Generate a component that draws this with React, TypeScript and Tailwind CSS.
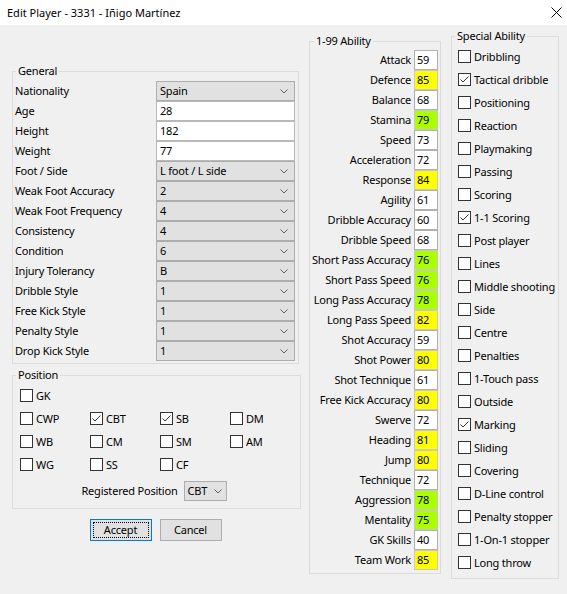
import React from "react";

const FONT = { fontFamily: '"Noto Sans", "Open Sans", sans-serif' };

function Chevron() {
  return (
    <svg width="8" height="5" viewBox="0 0 8 5" className="shrink-0">
      <polyline points="0.5,0.5 4,4 7.5,0.5" fill="none" stroke="#606060" strokeWidth="1" />
    </svg>
  );
}

function Combo({ value, className = "" }: { value: string; className?: string }) {
  return (
    <div className={`flex h-5 items-center justify-between border border-[#adadad] bg-[#e1e1e1] pl-[3px] pr-[6px] ${className}`}>
      <span>{value}</span>
      <Chevron />
    </div>
  );
}

function TextBox({ value }: { value: string }) {
  return (
    <div className="flex h-5 w-[139px] items-center border border-[#b9b9b9] bg-white pl-[3px]">{value}</div>
  );
}

function CheckBox({ checked }: { checked?: boolean }) {
  return (
    <span className="flex h-[13px] w-[13px] shrink-0 items-center justify-center border border-[#333333] bg-white">
      {checked && (
        <svg width="11" height="11" viewBox="0 0 11 11">
          <polyline points="1.5,5.5 4,8 9.5,2.5" fill="none" stroke="#333333" strokeWidth="1" />
        </svg>
      )}
    </span>
  );
}

function Check({ label, checked }: { label: string; checked?: boolean }) {
  return (
    <div className="flex items-center gap-[3px]">
      <CheckBox checked={checked} />
      <span>{label}</span>
    </div>
  );
}

const general: { label: string; value: string; kind: "combo" | "text" }[] = [
  { label: "Nationality", value: "Spain", kind: "combo" },
  { label: "Age", value: "28", kind: "text" },
  { label: "Height", value: "182", kind: "text" },
  { label: "Weight", value: "77", kind: "text" },
  { label: "Foot / Side", value: "L foot / L side", kind: "combo" },
  { label: "Weak Foot Accuracy", value: "2", kind: "combo" },
  { label: "Weak Foot Frequency", value: "4", kind: "combo" },
  { label: "Consistency", value: "4", kind: "combo" },
  { label: "Condition", value: "6", kind: "combo" },
  { label: "Injury Tolerancy", value: "B", kind: "combo" },
  { label: "Dribble Style", value: "1", kind: "combo" },
  { label: "Free Kick Style", value: "1", kind: "combo" },
  { label: "Penalty Style", value: "1", kind: "combo" },
  { label: "Drop Kick Style", value: "1", kind: "combo" },
];

const abilities: [string, number][] = [
  ["Attack", 59],
  ["Defence", 85],
  ["Balance", 68],
  ["Stamina", 79],
  ["Speed", 73],
  ["Acceleration", 72],
  ["Response", 84],
  ["Agility", 61],
  ["Dribble Accuracy", 60],
  ["Dribble Speed", 68],
  ["Short Pass Accuracy", 76],
  ["Short Pass Speed", 76],
  ["Long Pass Accuracy", 78],
  ["Long Pass Speed", 82],
  ["Shot Accuracy", 59],
  ["Shot Power", 80],
  ["Shot Technique", 61],
  ["Free Kick Accuracy", 80],
  ["Swerve", 72],
  ["Heading", 81],
  ["Jump", 80],
  ["Technique", 72],
  ["Aggression", 78],
  ["Mentality", 75],
  ["GK Skills", 40],
  ["Team Work", 85],
];

const specials: [string, boolean][] = [
  ["Dribbling", false],
  ["Tactical dribble", true],
  ["Positioning", false],
  ["Reaction", false],
  ["Playmaking", false],
  ["Passing", false],
  ["Scoring", false],
  ["1-1 Scoring", true],
  ["Post player", false],
  ["Lines", false],
  ["Middle shooting", false],
  ["Side", false],
  ["Centre", false],
  ["Penalties", false],
  ["1-Touch pass", false],
  ["Outside", false],
  ["Marking", true],
  ["Sliding", false],
  ["Covering", false],
  ["D-Line control", false],
  ["Penalty stopper", false],
  ["1-On-1 stopper", false],
  ["Long throw", false],
];

function valueBg(v: number) {
  if (v >= 80) return "bg-[#ffff00] border-[#c8c8c8]";
  if (v >= 75) return "bg-[#aaff00] border-[#c8c8c8]";
  return "bg-white border-[#b0b0b0]";
}

export default function App() {
  return (
    <div
      className="h-[594px] w-[567px] overflow-hidden whitespace-nowrap bg-[#f0f0f0] text-[11px] leading-[16px] tracking-[-0.2px] text-black"
      style={FONT}
    >
      {/* Title bar */}
      <div className="flex h-[25px] items-center justify-between bg-white pl-[7px] pr-[5px] tracking-normal">
        <span>Edit Player - 3331 - Iñigo Martínez</span>
        <svg width="11" height="11" viewBox="0 0 11 11">
          <line x1="0.5" y1="0.5" x2="10.5" y2="10.5" stroke="#000" strokeWidth="1" />
          <line x1="10.5" y1="0.5" x2="0.5" y2="10.5" stroke="#000" strokeWidth="1" />
        </svg>
      </div>

      <div className="flex pl-[12px]">
        {/* Column 1 */}
        <div className="mt-[38px] flex w-[287px] flex-col">
          <fieldset className="border border-[#dcdcdc] pb-[2px] pt-[2px]">
            <legend className="ml-[3px] px-[2px] leading-[16px]">General</legend>
            <div className="pl-[2px] pr-[3px]">
              {general.map((g) => (
                <div key={g.label} className="flex h-5 items-center justify-between">
                  <span>{g.label}</span>
                  {g.kind === "combo" ? <Combo value={g.value} className="w-[139px]" /> : <TextBox value={g.value} />}
                </div>
              ))}
            </div>
          </fieldset>

          <fieldset className="mt-[3px] border border-[#dcdcdc] pb-[7px] pt-[1px]">
            <legend className="ml-[3px] px-[2px] leading-[16px]">Position</legend>
            <div className="pl-[7px]">
              <div className="flex h-[23px] items-center">
                <Check label="GK" />
              </div>
              {[
                [["CWP", false], ["CBT", true], ["SB", true], ["DM", false]],
                [["WB", false], ["CM", false], ["SM", false], ["AM", false]],
                [["WG", false], ["SS", false], ["CF", false]],
              ].map((row, i) => (
                <div key={i} className="grid h-[23px] grid-cols-[70px_70px_70px_70px] items-center">
                  {row.map(([l, c]) => (
                    <Check key={l as string} label={l as string} checked={c as boolean} />
                  ))}
                </div>
              ))}
              <div className="mt-[5px] flex items-center justify-center gap-[6px] pr-[12px]">
                <span>Registered Position</span>
                <Combo value="CBT" className="w-[43px] !pr-[4px]" />
              </div>
            </div>
          </fieldset>

          <div className="mt-[10px] flex justify-center gap-[8px]">
            <button className="flex h-[22px] w-[62px] items-center justify-center border border-[#0078d7] bg-[#e1e1e1] p-[2px]">
              <span className="flex h-full w-full items-center justify-center border border-dotted border-black">Accept</span>
            </button>
            <button className="flex h-[22px] w-[62px] items-center justify-center border border-[#adadad] bg-[#e1e1e1]">
              Cancel
            </button>
          </div>
        </div>

        {/* Column 2 */}
        <fieldset className="ml-[10px] mt-[8px] h-[541px] w-[132px] border border-[#dcdcdc] pb-[2px] pt-[1px]">
          <legend className="ml-[4px] px-[2px] leading-[16px]">1-99 Ability</legend>
          <div className="pr-[2px]">
            {abilities.map(([l, v]) => (
              <div key={l} className="flex h-5 items-center justify-end gap-[3px]">
                <span>{l}</span>
                <span className={`flex h-5 w-[24px] items-center border pl-[2px] ${valueBg(v)}`}>{v}</span>
              </div>
            ))}
          </div>
        </fieldset>

        {/* Column 3 */}
        <fieldset className="ml-[10px] mt-[3px] h-[551px] w-[108px] border border-[#dcdcdc] pt-[1px]">
          <legend className="ml-[3px] px-[2px] leading-[16px]">Special Ability</legend>
          <div className="pl-[6px]">
            {specials.map(([l, c]) => (
              <div key={l} className="flex h-[23px] items-center">
                <Check label={l} checked={c} />
              </div>
            ))}
          </div>
        </fieldset>
      </div>
    </div>
  );
}
